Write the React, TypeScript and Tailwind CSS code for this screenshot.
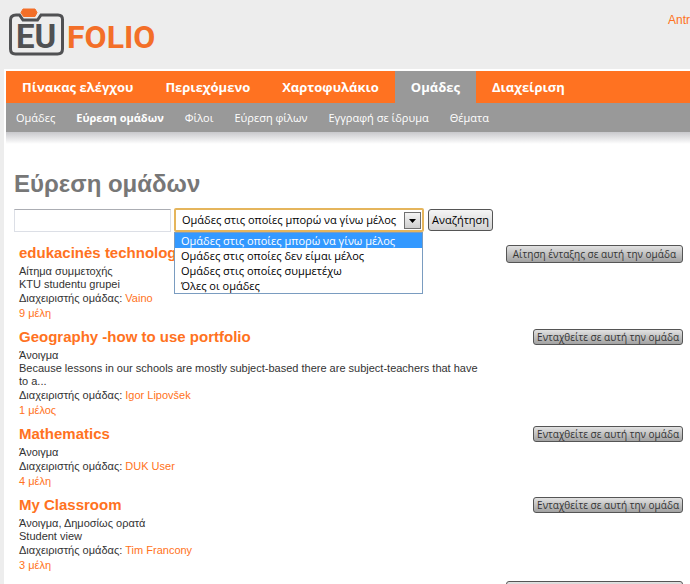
import React, { useState } from "react";
import clsx from "clsx";

interface Group {
  title: string;
  type: string;
  description?: string;
  admin: string;
  members: string;
  needsRequest?: boolean;
}

const mainNav = ["Πίνακας ελέγχου", "Περιεχόμενο", "Χαρτοφυλάκιο", "Ομάδες", "Διαχείριση"];

const subNav = ["Ομάδες", "Εύρεση ομάδων", "Φίλοι", "Εύρεση φίλων", "Εγγραφή σε ίδρυμα", "Θέματα"];

const filters = [
  "Ομάδες στις οποίες μπορώ να γίνω μέλος",
  "Ομάδες στις οποίες δεν είμαι μέλος",
  "Ομάδες στις οποίες συμμετέχω",
  "Όλες οι ομάδες",
];

const groups: Group[] = [
  {
    title: "edukacinės technolog",
    type: "Αίτημα συμμετοχής",
    description: "KTU studentu grupei",
    admin: "Vaino",
    members: "9 μέλη",
    needsRequest: true,
  },
  {
    title: "Geography -how to use portfolio",
    type: "Άνοιγμα",
    description:
      "Because lessons in our schools are mostly subject-based there are subject-teachers that have to a...",
    admin: "Igor Lipovšek",
    members: "1 μέλος",
  },
  {
    title: "Mathematics",
    type: "Άνοιγμα",
    admin: "DUK User",
    members: "4 μέλη",
  },
  {
    title: "My Classroom",
    type: "Άνοιγμα, Δημοσίως ορατά",
    description: "Student view",
    admin: "Tim Francony",
    members: "3 μέλη",
  },
];

const Logo = () => (
  <svg width="150" height="50" viewBox="0 0 150 50" role="img" aria-label="EU Folio">
    <path
      d="M8 8 H11.500 L15 13 H29.500 L33 8 H50 Q54.500 8 54.500 12.500 V42 Q54.500 47 49.500 47 H7.500 Q2.500 47 2.500 42 V13 Q2.500 8 8 8 Z"
      fill="none"
      stroke="#505153"
      strokeWidth="3"
    />
    <path d="M15 2 H27 L29 5.500 L27 9.500 H15.500 L13 5.500 Z" fill="#f36f28" stroke="#f36f28" strokeLinejoin="round" />
    <text x="8" y="41" fontFamily="Roboto, sans-serif" fontWeight="700" fontSize="33" fill="#505153">
      EU
    </text>
    <text x="59" y="41" fontFamily="Roboto, sans-serif" fontWeight="700" fontSize="32" fill="#f36f28">
      FOLIO
    </text>
  </svg>
);

const JoinButton = ({ needsRequest }: { needsRequest?: boolean }) => (
  <button
    type="button"
    className={clsx(
      "mt-px shrink-0 rounded-[3px] border border-[#555] bg-linear-to-b from-[#e2e2e2] to-[#a2a2a2] text-[10px] text-[#333] whitespace-nowrap",
      needsRequest ? "h-[18px] px-[6px] leading-[16px]" : "h-4 px-[3px] leading-[14px]"
    )}
  >
    {needsRequest ? "Αίτηση ένταξης σε αυτή την ομάδα" : "Ενταχθείτε σε αυτή την ομάδα"}
  </button>
);

const GroupRow = ({ group }: { group: Group }) => (
  <li className="flex items-start justify-between pb-[7px]">
    <div className="w-[470px] font-['Liberation_Sans','Open_Sans',sans-serif] text-[11px]">
      <h2 className="mb-0.5 text-[15px] leading-[18px] font-bold">
        <a href="#" className="text-[#ff7221]">{group.title}</a>
      </h2>
      <p className="leading-[14px]">{group.type}</p>
      {group.description && <p className="leading-[13px]">{group.description}</p>}
      <p className="leading-[14px]">
        Διαχειριστής ομάδας: <a href="#" className="text-[#ff7221]">{group.admin}</a>
      </p>
      <p className="leading-4">
        <a href="#" className="text-[#ff7221]">{group.members}</a>
      </p>
    </div>
    <JoinButton needsRequest={group.needsRequest} />
  </li>
);

const SearchForm = () => {
  const [query, setQuery] = useState("");
  const [filter, setFilter] = useState(filters[0]);
  const [open, setOpen] = useState(true);

  return (
    <form className="flex items-center text-[11px] text-black" onSubmit={(e) => e.preventDefault()}>
      <input
        type="text"
        aria-label="Αναζήτηση ομάδων"
        value={query}
        onChange={(e) => setQuery(e.target.value)}
        className="h-[23px] w-[157px] border border-[#dcdfe6] border-t-[#abadb3] bg-white px-1 outline-none"
      />
      <div className="relative ml-[3px]">
        <select
          aria-label="Φίλτρο ομάδων"
          value={filter}
          onChange={(e) => setFilter(e.target.value)}
          onMouseDown={(e) => {
            e.preventDefault();
            setOpen(!open);
          }}
          className="block h-6 w-[250px] appearance-none rounded-[2px] border-2 border-[#e5b55c] bg-white pl-[6px] outline-none"
        >
          {filters.map((f) => (
            <option key={f}>{f}</option>
          ))}
        </select>
        <span className="pointer-events-none absolute top-1 right-[3px] flex h-[17px] w-[17px] items-center justify-center border border-[#707070] bg-linear-to-b from-[#f4f4f4] to-[#cfcfcf]">
          <svg width="7" height="4" viewBox="0 0 7 4">
            <path d="M0 0h7L3.500 4z" fill="#000" />
          </svg>
        </span>
        {open && (
          <ul className="absolute top-full left-0 z-10 w-[249px] border border-[#7a9cc0] bg-white">
            {filters.map((f) => (
              <li
                key={f}
                onClick={() => {
                  setFilter(f);
                  setOpen(false);
                }}
                className={clsx("pl-[6px] leading-[15px]", f === filter && "bg-[#3399ff] text-white")}
              >
                {f}
              </li>
            ))}
          </ul>
        )}
      </div>
      <button
        type="submit"
        className="ml-1 h-[22px] rounded-[3px] border border-[#555] bg-linear-to-b from-[#f5f5f5] to-[#d2d2d2] px-[3px]"
      >
        Αναζήτηση
      </button>
    </form>
  );
};

const App = () => {
  return (
    <div className="h-screen overflow-hidden bg-[#ededed] font-['Open_Sans',sans-serif] text-[#333]">
      <header className="flex h-[69px] items-start justify-between pl-2">
        <a href="#" className="mt-[7px]">
          <Logo />
        </a>
        <a href="#" className="mt-3 font-['Liberation_Sans',sans-serif] text-[12px] leading-4 text-[#ff7221]">
          Antr
        </a>
      </header>

      <div className="ml-1 bg-white pt-0.5 pl-0.5">
        <nav className="flex h-8 bg-[#ff7221] text-[13px] font-bold text-white">
          {mainNav.map((item) => (
            <a
              key={item}
              href="#"
              className={clsx("px-4 leading-8", item === "Ομάδες" && "bg-[#999]")}
            >
              {item}
            </a>
          ))}
        </nav>
        <nav className="flex h-[29px] gap-[21px] bg-[#999] pl-[10px] text-[11px] text-white">
          {subNav.map((item) => (
            <a key={item} href="#" className={clsx("leading-[29px]", item === "Εύρεση ομάδων" && "font-bold")}>
              {item}
            </a>
          ))}
        </nav>
        <div className="h-3 bg-linear-to-b from-[#c8c8cc] to-white" />

        <main className="px-2 pt-6 pr-[7px]">
          <h1 className="mb-2 font-['Liberation_Sans',sans-serif] text-[24px] leading-8 font-bold text-[#777]">
            Εύρεση ομάδων
          </h1>
          <SearchForm />
          <ul className="mt-3 pl-[5px]">
            {groups.map((group) => (
              <GroupRow key={group.title} group={group} />
            ))}
            <li className="flex justify-end">
              <JoinButton needsRequest />
            </li>
          </ul>
        </main>
      </div>
    </div>
  );
};

export default App;
